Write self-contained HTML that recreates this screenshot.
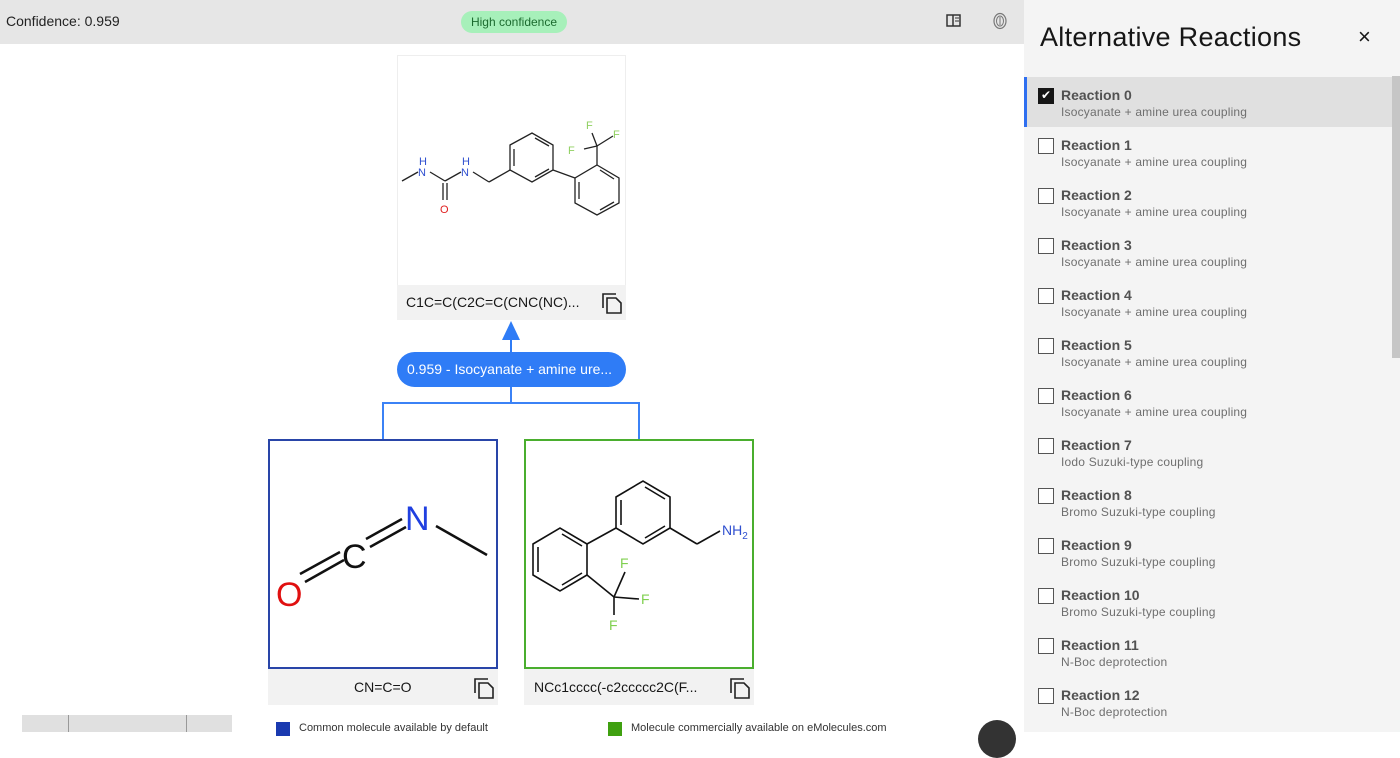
<!DOCTYPE html>
<html><head><style>
*{margin:0;padding:0;box-sizing:border-box}
body{width:1400px;height:732px;overflow:hidden;background:#fff;font-family:"Liberation Sans","DejaVu Sans",sans-serif;position:relative}
.abs{position:absolute}
.top{left:0;top:0;width:1024px;height:44px;background:#e6e6e6}
.right{left:1024px;top:0;width:376px;height:732px;background:#f4f4f4}
.item{position:absolute;left:0;width:368px;height:50px}
.item .cb{position:absolute;left:14px;top:11px;width:16px;height:16px;border:1.5px solid #555;background:#fff}
.item .t{position:absolute;left:37px;top:10px;font-size:14px;font-weight:bold;color:#525252}
.item .s{position:absolute;left:37px;top:28px;font-size:12px;color:#6f6f6f;letter-spacing:0.2px}
.cap{background:#f2f2f2;font-size:14px;color:#161616}
</style></head><body>
<div class="abs top"></div>
<div class="abs" style="left:6px;top:13px;font-size:14px;color:#222">Confidence: 0.959</div>
<div class="abs" style="left:461px;top:11px;width:106px;height:22px;border-radius:11px;background:#a7f0ba;color:#1c6b2f;font-size:12px;text-align:center;line-height:22px">High confidence</div>
<svg class="abs" style="left:946px;top:14px" width="16" height="14"><rect x="1" y="1" width="13" height="11" fill="none" stroke="#333" stroke-width="1.5"/><line x1="7" y1="1" x2="7" y2="12" stroke="#333" stroke-width="1.5"/><line x1="9" y1="4" x2="13" y2="4" stroke="#333"/><line x1="9" y1="7" x2="13" y2="7" stroke="#333"/></svg>
<svg class="abs" style="left:992px;top:12px" width="16" height="18"><ellipse cx="8" cy="9" rx="6" ry="7.5" fill="none" stroke="#777" stroke-width="1.2"/><ellipse cx="8" cy="9" rx="3.5" ry="5" fill="none" stroke="#777"/><line x1="8" y1="5" x2="8" y2="13" stroke="#777"/></svg>

<div class="abs" style="left:397px;top:55px;width:229px;height:230px;border:1px solid #eee;border-bottom:none;background:#fff"></div>
<div class="abs cap" style="left:397px;top:285px;width:229px;height:35px;line-height:34px;padding-left:9px">C1C=C(C2C=C(CNC(NC)...</div>
<svg class="abs" style="left:0;top:0" width="1024" height="732">
<g stroke="#222" stroke-width="1.3" fill="none">
<line x1="402" y1="181" x2="418" y2="172"/><line x1="430" y1="172" x2="445" y2="181"/><line x1="445" y1="181" x2="461" y2="172"/>
<line x1="443" y1="183" x2="443" y2="200"/><line x1="447" y1="183" x2="447" y2="200"/>
<line x1="473" y1="172" x2="489" y2="182"/><line x1="489" y1="182" x2="510" y2="170"/>
<polygon points="510,145 532,133 553,145 553,170 532,182 510,170"/>
<line x1="514" y1="149" x2="514" y2="166"/><line x1="535" y1="138" x2="549" y2="146"/><line x1="535" y1="177" x2="549" y2="169"/>
<line x1="553" y1="170" x2="575" y2="178"/>
<polygon points="597,165 619,178 619,203 597,215 575,203 575,178"/>
<line x1="579" y1="182" x2="579" y2="199"/><line x1="600" y1="170" x2="614" y2="179"/><line x1="600" y1="210" x2="614" y2="202"/>
<line x1="597" y1="165" x2="597" y2="146"/><line x1="597" y1="146" x2="584" y2="149"/><line x1="597" y1="146" x2="613" y2="136"/><line x1="597" y1="146" x2="592" y2="133"/>
</g>
<g font-size="11" font-family="Liberation Sans">
<text x="419" y="165" fill="#3050d0">H</text><text x="418" y="176" fill="#3050d0">N</text>
<text x="462" y="165" fill="#3050d0">H</text><text x="461" y="176" fill="#3050d0">N</text>
<text x="440" y="213" fill="#e02020">O</text>
<text x="568" y="154" fill="#90d060">F</text><text x="613" y="138" fill="#90d060">F</text><text x="586" y="129" fill="#90d060">F</text>
</g>
<polygon points="511,321 502,340 520,340" fill="#2f7cf6"/>
<line x1="511" y1="338" x2="511" y2="352" stroke="#2f7cf6" stroke-width="2"/>
<g stroke="#3b82f6" stroke-width="2" fill="none"><line x1="511" y1="387" x2="511" y2="403"/><polyline points="383,439 383,403 639,403 639,439"/></g>
<g stroke="#111" stroke-width="2.5">
<line x1="305" y1="582" x2="344" y2="560"/><line x1="300" y1="574" x2="340" y2="552"/>
<line x1="370" y1="547" x2="406" y2="527"/><line x1="366" y1="539" x2="402" y2="519"/>
<line x1="436" y1="526" x2="487" y2="555"/>
</g>
<text x="276" y="606" font-size="34" fill="#e01010">O</text>
<text x="342" y="568" font-size="34" fill="#111">C</text>
<text x="405" y="530" font-size="34" fill="#2040e0">N</text>
<g stroke="#111" stroke-width="1.6" fill="none">
<polygon points="616,497 643,481 670,497 670,528 643,544 616,528"/>
<line x1="621" y1="500" x2="621" y2="525"/><line x1="645" y1="487" x2="665" y2="499"/><line x1="645" y1="538" x2="665" y2="526"/>
<line x1="670" y1="528" x2="697" y2="544"/><line x1="697" y1="544" x2="720" y2="531"/>
<polygon points="533,544 560,528 587,544 587,575 560,591 533,575"/>
<line x1="538" y1="547" x2="538" y2="572"/><line x1="562" y1="534" x2="582" y2="546"/><line x1="562" y1="585" x2="582" y2="573"/>
<line x1="587" y1="544" x2="616" y2="528"/>
<line x1="587" y1="575" x2="614" y2="597"/><line x1="614" y1="597" x2="625" y2="572"/><line x1="614" y1="597" x2="639" y2="599"/><line x1="614" y1="597" x2="614" y2="615"/>
</g>
<g font-family="Liberation Sans" fill="#80d050" font-size="14">
<text x="620" y="568">F</text><text x="641" y="604">F</text><text x="609" y="630">F</text></g>
<text x="722" y="535" font-size="14" fill="#3050d0">NH<tspan font-size="10" dy="4">2</tspan></text>
</svg>
<div class="abs" style="left:397px;top:352px;width:229px;height:35px;border-radius:18px;background:#2f7cf6;color:#fff;font-size:14px;line-height:35px;padding-left:10px">0.959 - Isocyanate + amine ure...</div>

<div class="abs" style="left:268px;top:439px;width:230px;height:230px;border:2px solid #2945a8"></div>
<div class="abs cap" style="left:268px;top:669px;width:230px;height:36px;line-height:36px;padding-left:86px">CN=C=O</div>
<div class="abs" style="left:524px;top:439px;width:230px;height:230px;border:2px solid #4aae2e"></div>
<div class="abs cap" style="left:524px;top:669px;width:230px;height:36px;line-height:36px;padding-left:10px">NCc1cccc(-c2ccccc2C(F...</div>
<svg class="abs" style="left:600px;top:291px" width="24" height="24"><path d="M3 17V3h13" fill="none" stroke="#222" stroke-width="1.6"/><path d="M7 7h9l5 5v10H7z" fill="none" stroke="#222" stroke-width="1.6"/></svg>
<svg class="abs" style="left:472px;top:676px" width="24" height="24"><path d="M3 17V3h13" fill="none" stroke="#222" stroke-width="1.6"/><path d="M7 7h9l5 5v10H7z" fill="none" stroke="#222" stroke-width="1.6"/></svg>
<svg class="abs" style="left:728px;top:676px" width="24" height="24"><path d="M3 17V3h13" fill="none" stroke="#222" stroke-width="1.6"/><path d="M7 7h9l5 5v10H7z" fill="none" stroke="#222" stroke-width="1.6"/></svg>

<div class="abs" style="left:22px;top:715px;width:210px;height:17px;background:#e0e0e0"></div>
<div class="abs" style="left:68px;top:715px;width:1px;height:17px;background:#999"></div>
<div class="abs" style="left:186px;top:715px;width:1px;height:17px;background:#999"></div>
<div class="abs" style="left:276px;top:722px;width:14px;height:14px;background:#1a3ab0"></div>
<div class="abs" style="left:299px;top:722px;font-size:11px;color:#333">Common molecule available by default</div>
<div class="abs" style="left:608px;top:722px;width:14px;height:14px;background:#3fa010"></div>
<div class="abs" style="left:631px;top:722px;font-size:11px;color:#333">Molecule commercially available on eMolecules.com</div>
<div class="abs" style="left:978px;top:720px;width:38px;height:38px;border-radius:50%;background:#333"></div>

<div class="abs right">
<div class="abs" style="left:16px;top:22px;font-size:27px;color:#161616;letter-spacing:0.3px">Alternative Reactions</div>
<div class="abs" style="left:334px;top:24px;font-size:22px;color:#161616">×</div>
<div class="abs" style="left:368px;top:76px;width:8px;height:282px;background:#c6c6c6"></div>
<div class="item" style="top:77px;background:#e0e0e0;border-left:3px solid #2f6ff0"><div class="cb" style="left:11px;background:#161616;border-color:#161616;color:#fff;font-size:12px;line-height:13px;text-align:center">✔</div><div class="t" style="left:34px">Reaction 0</div><div class="s" style="left:34px">Isocyanate + amine urea coupling</div></div>
<div class="item" style="top:127px"><div class="cb"></div><div class="t">Reaction 1</div><div class="s">Isocyanate + amine urea coupling</div></div>
<div class="item" style="top:177px"><div class="cb"></div><div class="t">Reaction 2</div><div class="s">Isocyanate + amine urea coupling</div></div>
<div class="item" style="top:227px"><div class="cb"></div><div class="t">Reaction 3</div><div class="s">Isocyanate + amine urea coupling</div></div>
<div class="item" style="top:277px"><div class="cb"></div><div class="t">Reaction 4</div><div class="s">Isocyanate + amine urea coupling</div></div>
<div class="item" style="top:327px"><div class="cb"></div><div class="t">Reaction 5</div><div class="s">Isocyanate + amine urea coupling</div></div>
<div class="item" style="top:377px"><div class="cb"></div><div class="t">Reaction 6</div><div class="s">Isocyanate + amine urea coupling</div></div>
<div class="item" style="top:427px"><div class="cb"></div><div class="t">Reaction 7</div><div class="s">Iodo Suzuki-type coupling</div></div>
<div class="item" style="top:477px"><div class="cb"></div><div class="t">Reaction 8</div><div class="s">Bromo Suzuki-type coupling</div></div>
<div class="item" style="top:527px"><div class="cb"></div><div class="t">Reaction 9</div><div class="s">Bromo Suzuki-type coupling</div></div>
<div class="item" style="top:577px"><div class="cb"></div><div class="t">Reaction 10</div><div class="s">Bromo Suzuki-type coupling</div></div>
<div class="item" style="top:627px"><div class="cb"></div><div class="t">Reaction 11</div><div class="s">N-Boc deprotection</div></div>
<div class="item" style="top:677px"><div class="cb"></div><div class="t">Reaction 12</div><div class="s">N-Boc deprotection</div></div>
</div>
</body></html>
